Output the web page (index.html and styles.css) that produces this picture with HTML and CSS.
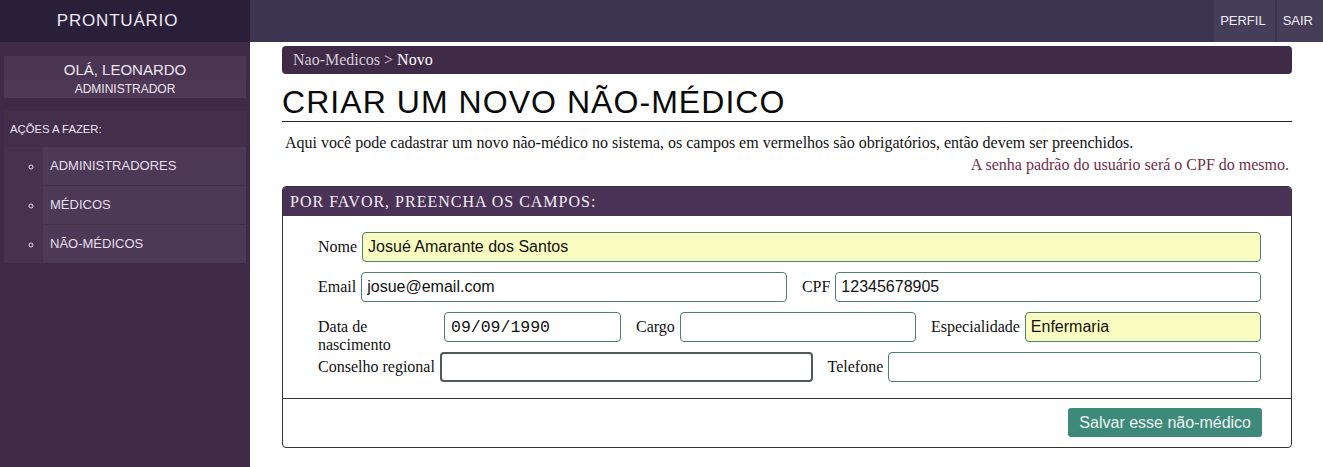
FILE: index.html
```html
<!DOCTYPE html>
<html lang="pt-BR">
<head>
<meta charset="utf-8">
<title>Prontuário - Novo não-médico</title>
<link rel="stylesheet" href="styles.css">
</head>
<body>
<div class="app">
  <aside class="sidebar">
    <div class="brand">PRONTUÁRIO</div>
    <div class="user">
      <div class="user-name">OLÁ, LEONARDO</div>
      <div class="user-role">ADMINISTRADOR</div>
    </div>
    <div class="actions">
      <div class="actions-title">AÇÕES A FAZER:</div>
      <ul class="menu">
        <li><a href="#">ADMINISTRADORES</a></li>
        <li><a href="#">MÉDICOS</a></li>
        <li><a href="#">NÃO-MÉDICOS</a></li>
      </ul>
    </div>
  </aside>
  <div class="main">
    <header class="topbar">
      <a class="top-btn" href="#">PERFIL</a>
      <a class="top-btn last" href="#">SAIR</a>
    </header>
    <main class="content">
      <nav class="crumbs"><span class="crumb-prev">Nao-Medicos &gt;</span> <span class="crumb-cur">Novo</span></nav>
      <h1 class="title">CRIAR UM NOVO NÃO-MÉDICO</h1>
      <p class="intro">Aqui você pode cadastrar um novo não-médico no sistema, os campos em vermelhos são obrigatórios, então devem ser preenchidos.</p>
      <p class="note">A senha padrão do usuário será o CPF do mesmo.</p>
      <form class="card">
        <div class="card-head">POR FAVOR, PREENCHA OS CAMPOS:</div>
        <div class="card-body">
          <div class="row row-1">
            <label class="lbl">Nome</label>
            <input class="inp req" type="text" value="Josué Amarante dos Santos">
          </div>
          <div class="row row-2">
            <label class="lbl">Email</label>
            <input class="inp" type="text" value="josue@email.com">
            <label class="lbl sep">CPF</label>
            <input class="inp" type="text" value="12345678905">
          </div>
          <div class="row row-3">
            <label class="lbl lbl-wrap">Data de nascimento</label>
            <input class="inp mono" type="text" value="09/09/1990">
            <label class="lbl sep">Cargo</label>
            <input class="inp" type="text" value="">
            <label class="lbl sep">Especialidade</label>
            <input class="inp req" type="text" value="Enfermaria">
          </div>
          <div class="row row-2">
            <label class="lbl">Conselho regional</label>
            <input class="inp active" type="text" value="" autofocus>
            <label class="lbl sep">Telefone</label>
            <input class="inp" type="text" value="">
          </div>
        </div>
        <div class="card-foot">
          <button class="save" type="button">Salvar esse não-médico</button>
        </div>
      </form>
    </main>
  </div>
</div>
</body>
</html>
```
FILE: styles.css
```css
* { box-sizing: border-box; }
html, body { margin: 0; padding: 0; height: 100%; }
body {
  font-family: "Liberation Serif", "Times New Roman", serif;
  font-size: 16px;
  color: #111;
  background: #fff;
}
.app { display: flex; height: 100vh; }

.sidebar {
  width: 250px;
  flex: 0 0 250px;
  background: #3f2b47;
  font-family: "Liberation Sans", Arial, sans-serif;
  color: #ece6f0;
}
.brand {
  height: 42px;
  line-height: 41px;
  background: #2a1f39;
  text-align: center;
  padding-right: 15px;
  font-size: 17px;
  letter-spacing: 0.8px;
  color: #eeeaf2;
}
.user {
  margin: 14px 4px 0;
  background: #4a3552;
  text-align: center;
  padding: 3px 0 0;
}
.user-name { font-size: 15px; line-height: 21px; }
.user-role { font-size: 12px; line-height: 18px; background: #4d3855; }
.actions {
  margin: 13px 4px 0;
  background: #432e4b;
}
.actions-title {
  font-size: 11.3px;
  line-height: 36px;
  padding-left: 6px;
}
.menu {
  list-style: circle;
  margin: 0;
  padding: 0 0 0 39px;
  background: #46314e;
  color: #e6dfec;
}
.menu li {
  background: #4c3955;
  border-bottom: 1px solid #433049;
  font-size: 13px;
  line-height: 38px;
  padding-left: 7px;
}
.menu li::marker { font-size: 12px; }
.menu li:last-child { border-bottom: 0; }
.menu a { color: #e6dfec; text-decoration: none; }

.main { flex: 1; display: flex; flex-direction: column; min-width: 0; }
.topbar {
  height: 42px;
  background: #3c3450;
  display: flex;
  justify-content: flex-end;
  gap: 2px;
}
.top-btn {
  background: #463d58;
  color: #f0ecf4;
  text-decoration: none;
  font-family: "Liberation Sans", Arial, sans-serif;
  font-size: 13px;
  line-height: 42px;
  padding: 0 9px 0 6px;
}
.top-btn.last { padding: 0 10px 0 6px; }

.content { padding: 4px 31px 0 32px; }
.crumbs {
  height: 28px;
  line-height: 28px;
  background: #3f2a47;
  border-radius: 4px;
  padding: 0 11px;
  font-size: 16px;
}
.crumb-prev { color: #d4cdd8; }
.crumb-cur { color: #fff; }

.title {
  margin: 10px 0 0;
  font-family: "Liberation Sans", Arial, sans-serif;
  font-weight: normal;
  font-size: 32px;
  letter-spacing: 1.05px;
  line-height: 37px;
  color: #0a0a0a;
  border-bottom: 1px solid #222;
}
.intro { margin: 10px 3px 0; line-height: 21px; }
.note { margin: 1px 3px 0; line-height: 21px; text-align: right; color: #6f2e4a; }

.card {
  margin-top: 11px;
  border: 1px solid #333;
  border-radius: 4px;
  overflow: hidden;
}
.card-head {
  background: #4b3358;
  color: #f2eef5;
  height: 29px;
  line-height: 29px;
  padding-left: 7px;
  letter-spacing: 1px;
  font-size: 16px;
}
.card-body {
  display: flex;
  flex-direction: column;
  gap: 10px;
  padding: 16px 30px 16px 35px;
}
.row {
  display: grid;
  align-items: center;
  grid-template-rows: 30px;
  height: 30px;
}
.row-1 { grid-template-columns: auto 1fr; }
.row-2 { grid-template-columns: auto 1fr auto 1fr; }
.row-3 { grid-template-columns: 126px 177px auto 1fr auto 1fr; }
.lbl { margin-right: 5px; white-space: nowrap; }
.lbl.sep { margin-left: 15px; }
.lbl-wrap { white-space: normal; align-self: start; padding-top: 6px; line-height: 18px; }
.inp {
  height: 30px;
  width: 100%;
  min-width: 0;
  border: 1px solid #4e7d72;
  border-radius: 4px;
  background: #fff;
  padding: 0 5px;
  font-family: "Liberation Sans", Arial, sans-serif;
  font-size: 16px;
  color: #111;
  outline: none;
}
.inp.req { background: #fafdc0; }
.inp.mono { font-family: "Liberation Mono", "DejaVu Sans Mono", monospace; font-size: 16.5px; padding-left: 6px; }
.inp.active { border: 2px solid #50585a; padding-left: 4px; }

.card-foot {
  border-top: 1px solid #333;
  padding: 9px 29px 10px;
  display: flex;
  justify-content: flex-end;
}
.save {
  height: 29px;
  background: #3e8a7a;
  color: #eef5f3;
  border: 0;
  border-radius: 3px;
  font-family: "Liberation Sans", Arial, sans-serif;
  font-size: 16px;
  padding: 0 11px;
}
```
